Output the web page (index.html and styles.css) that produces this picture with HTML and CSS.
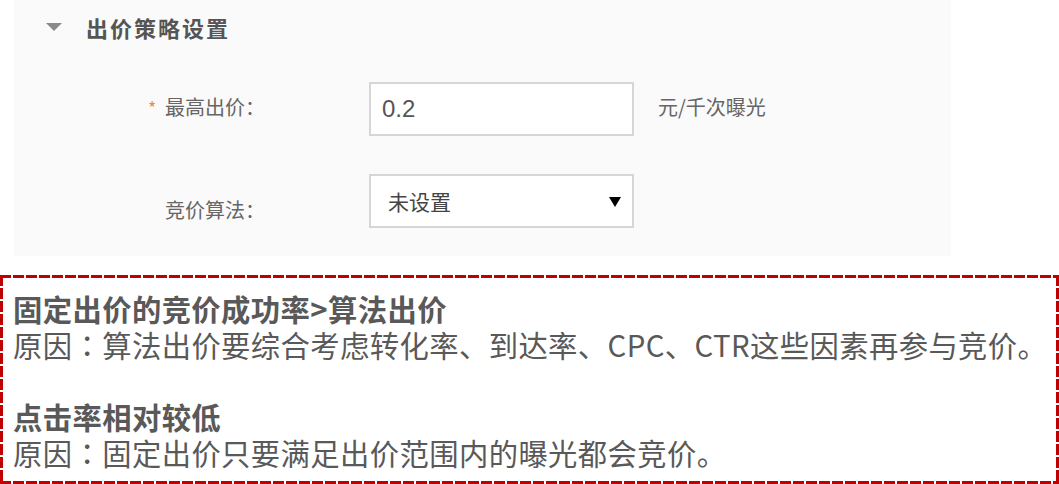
FILE: index.html
```html
<!DOCTYPE html>
<html lang="zh-CN">
<head>
    <meta charset="UTF-8">
    <title>出价策略设置</title>
    <link rel="stylesheet" href="styles.css">
</head>
<body>
    <section class="panel">
        <h2 class="panel-head">
            <span class="caret"></span>
            出价策略设置
        </h2>

        <div class="form">
            <div class="form-row">
                <label class="form-label" for="price"><span class="required">*</span>最高出价：</label>
                <input class="form-input" type="text" id="price" value="0.2">
                <span class="form-unit">元/千次曝光</span>
            </div>
            <div class="form-row">
                <label class="form-label form-label-low" for="algo">竞价算法：</label>
                <div class="select-wrap">
                    <select class="form-select" id="algo">
                        <option>未设置</option>
                    </select>
                </div>
            </div>
        </div>
    </section>

    <article class="notes">
        <div class="note">
            <h3>固定出价的竞价成功率&gt;算法出价</h3>
            <p>原因<span class="colon" lang="zh-TW">：</span>算法出价要综合考虑转化率、到达率、CPC、CTR这些因素再参与竞价。</p>
        </div>
        <div class="note">
            <h3>点击率相对较低</h3>
            <p>原因<span class="colon" lang="zh-TW">：</span>固定出价只要满足出价范围内的曝光都会竞价。</p>
        </div>
    </article>
</body>
</html>
```

FILE: styles.css
```css
body{
    margin: 0;
    background: #fff;
    font-family: "Noto Sans CJK SC", "Noto Sans", sans-serif;
}

.panel{
    width: 937px;
    height: 256px;
    margin-left: 14px;
    padding-top: 12px;
    box-sizing: border-box;
    background: #fafafa;
}

.panel-head{
    display: flex;
    align-items: center;
    height: 30px;
    margin: 0;
    padding-left: 32px;
    font-size: 22px;
    font-weight: bold;
    letter-spacing: 2px;
    color: #555;
}

.caret{
    width: 0;
    height: 0;
    margin-right: 24px;
    border-left: 8px solid transparent;
    border-right: 8px solid transparent;
    border-top: 8px solid #8a8a8a;
}

.form{
    display: flex;
    flex-direction: column;
    gap: 38px;
    margin-top: 40px;
}

.form-row{
    display: flex;
    align-items: flex-start;
    height: 54px;
}

.form-label{
    width: 355px;
    margin-top: 11px;
    padding-left: 151px;
    box-sizing: border-box;
    font-size: 20px;
    line-height: 28px;
    color: #666;
}
.form-label-low{margin-top: 22px;}

.required{
    display: inline-block;
    width: 17px;
    margin-left: -17px;
    color: #f5893d;
    font-size: 18px;
}

.form-input{
    width: 265px;
    height: 54px;
    padding: 0 11px;
    box-sizing: border-box;
    border: 2px solid #d6d6d6;
    background: #fff;
    font-family: "Liberation Sans", Arial, sans-serif;
    font-size: 24px;
    color: #555;
    outline: none;
}

.form-unit{
    margin: 11px 0 0 24px;
    font-size: 20px;
    line-height: 28px;
    color: #666;
}

.select-wrap{
    position: relative;
    width: 265px;
    height: 54px;
}

.select-wrap::after{
    content: "";
    position: absolute;
    top: 23px;
    right: 13px;
    border-left: 6px solid transparent;
    border-right: 6px solid transparent;
    border-top: 10px solid #000;
}

.form-select{
    width: 100%;
    height: 100%;
    padding-left: 17px;
    border: 2px solid #d6d6d6;
    border-radius: 0;
    background: #fff;
    appearance: none;
    -webkit-appearance: none;
    font-family: "Noto Sans CJK SC", sans-serif;
    font-size: 21px;
    color: #444;
    outline: none;
}

.notes{
    margin-top: 19px;
    padding: 15px 6px 14px 13px;
    background:
        repeating-linear-gradient(90deg, #c00000 0 11px, transparent 11px 13px) left top / 100% 3px no-repeat,
        repeating-linear-gradient(90deg, #c00000 0 11px, transparent 11px 13px) left bottom / 100% 3px no-repeat,
        repeating-linear-gradient(180deg, #c00000 0 11px, transparent 11px 13px) left top / 3px 100% no-repeat,
        repeating-linear-gradient(180deg, #c00000 0 11px, transparent 11px 13px) right top / 3px 100% no-repeat;
    color: #595959;
    font-size: 29.33px;
    line-height: 36px;
    letter-spacing: 0.4px;
    white-space: nowrap;
}

.note h3,
.note p{
    margin: 0;
    font-size: inherit;
}

.note h3{font-weight: bold;}
.note p{font-weight: normal;}

/* 冒号居中 */
.colon{font-family: "Noto Sans CJK TC", "Noto Sans CJK SC", sans-serif;}

.note + .note{margin-top: 36px;}
```
